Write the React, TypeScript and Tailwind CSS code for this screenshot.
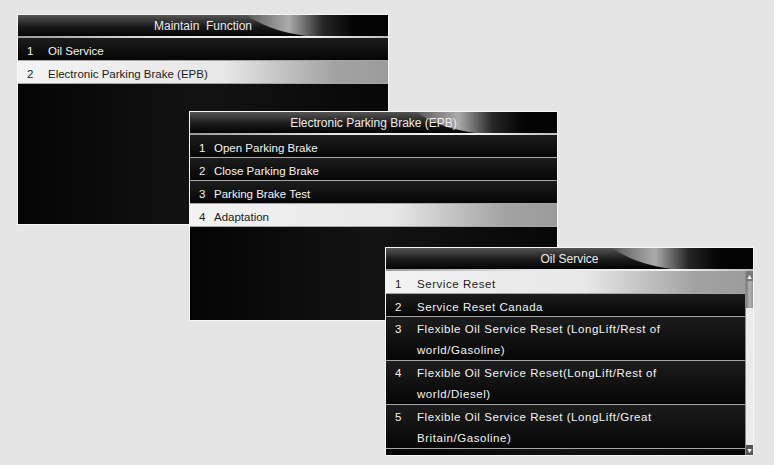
const font = { fontFamily: '"Liberation Sans", Arial, sans-serif' };

type PanelProps = {
  title: string;
  items: string[][];
  selected: number;
  pos: string;
  numCol: string;
  text: string;
  scroll?: boolean;
};

const Swoosh = () => (
  <svg
    className="absolute inset-0 h-full w-full"
    viewBox="0 0 370 21"
    preserveAspectRatio="none"
  >
    <defs>
      <linearGradient id="swoosh" gradientUnits="userSpaceOnUse" x1="228" y1="0" x2="335" y2="0">
        <stop offset="0" stopColor="#5a5a5a" />
        <stop offset="0.4" stopColor="#ababab" />
        <stop offset="0.72" stopColor="#262626" />
        <stop offset="1" stopColor="#040404" />
      </linearGradient>
    </defs>
    <path d="M228 0 C242 9 258 17 288 21 L370 21 L370 0 Z" fill="url(#swoosh)" />
  </svg>
);

const ScrollBar = () => (
  <div className="flex w-[8px] flex-col bg-[#ebebeb] border-l border-[#8c8c8c]">
    <div className="flex h-[10px] items-center justify-center bg-[#777] text-[7px] leading-none text-white">
      ▲
    </div>
    <div className="h-[27px] bg-[linear-gradient(to_right,#7a7a7a,#b0b0b0,#959595)]" />
    <div className="flex-1" />
    <div className="flex h-[10px] items-center justify-center bg-[#555] text-[7px] leading-none text-white">
      ▼
    </div>
  </div>
);

const Panel = ({ title, items, selected, pos, numCol, text, scroll }: PanelProps) => (
  <div
    className={`absolute flex flex-col overflow-hidden outline outline-[#f6f6f6] bg-[linear-gradient(to_right,#040404,#131313_50%,#070707)] ${pos}`}
    style={font}
  >
    <div className="relative h-[21px] shrink-0 bg-[linear-gradient(to_bottom,#555,#1a1a1a_55%,#040404)]">
      <Swoosh />
      <div className="relative h-[21px] whitespace-pre pt-[1px] text-center text-[12px] leading-[21px] text-[#ececec]">
        {title}
      </div>
    </div>
    <div className="h-[2px] shrink-0 bg-[linear-gradient(to_right,#9a9a9a,#e6e6e6_40%,#f2f2f2_80%,#bdbdbd)]" />

    <div className="flex flex-1">
      <div className="flex flex-1 flex-col">
        {items.map((lines, i) => (
          <div
            key={i}
            className={`flex shrink-0 border-b border-[#a6a6a6] ${text} ${
              i === selected
                ? "bg-[linear-gradient(to_right,#f3f3f3,#e7e7e7_56%,#a2a2a2_86%,#9c9c9c)] text-[#1b1b1b]"
                : "bg-[linear-gradient(to_bottom,#1c1c1c,#060606)] text-[#f4f4f4]"
            }`}
          >
            <div className={`shrink-0 pl-[9px] pt-[1.5px] ${numCol} ${lines.length > 1 ? "h-[21.5px] leading-[21px]" : "h-[22px] leading-[22px]"}`}>
              {i + 1}
            </div>
            <div>
              {lines.map((l) => (
                <div key={l} className={lines.length > 1 ? "h-[21.5px] pt-[1.5px] leading-[21px]" : "h-[22px] pt-[1.5px] leading-[22px]"}>
                  {l}
                </div>
              ))}
            </div>
          </div>
        ))}
        <div className="flex-1" />
      </div>
      {scroll && <ScrollBar />}
    </div>
  </div>
);

export default function App() {
  return (
    <div className="relative h-[465px] w-[774px] overflow-hidden bg-[#e5e5e5]">
      <Panel
        title="Maintain  Function"
        items={[["Oil Service"], ["Electronic Parking Brake (EPB)"]]}
        selected={1}
        pos="left-[18px] top-[15px] w-[370px] h-[209px]"
        numCol="w-[30px]"
        text="text-[11.5px]"
      />
      <Panel
        title="Electronic Parking Brake (EPB)"
        items={[
          ["Open Parking Brake"],
          ["Close Parking Brake"],
          ["Parking Brake Test"],
          ["Adaptation"],
        ]}
        selected={3}
        pos="left-[190px] top-[112px] w-[367px] h-[208px]"
        numCol="w-[24px]"
        text="text-[11.5px]"
      />
      <Panel
        title="Oil Service"
        items={[
          ["Service Reset"],
          ["Service Reset Canada"],
          ["Flexible Oil Service Reset (LongLift/Rest of", "world/Gasoline)"],
          ["Flexible Oil Service Reset(LongLift/Rest of", "world/Diesel)"],
          ["Flexible Oil Service Reset (LongLift/Great", "Britain/Gasoline)"],
        ]}
        selected={0}
        pos="left-[386px] top-[248px] w-[367px] h-[207px]"
        numCol="w-[31px]"
        text="text-[11.5px] tracking-[0.55px]"
        scroll
      />
    </div>
  );
}
